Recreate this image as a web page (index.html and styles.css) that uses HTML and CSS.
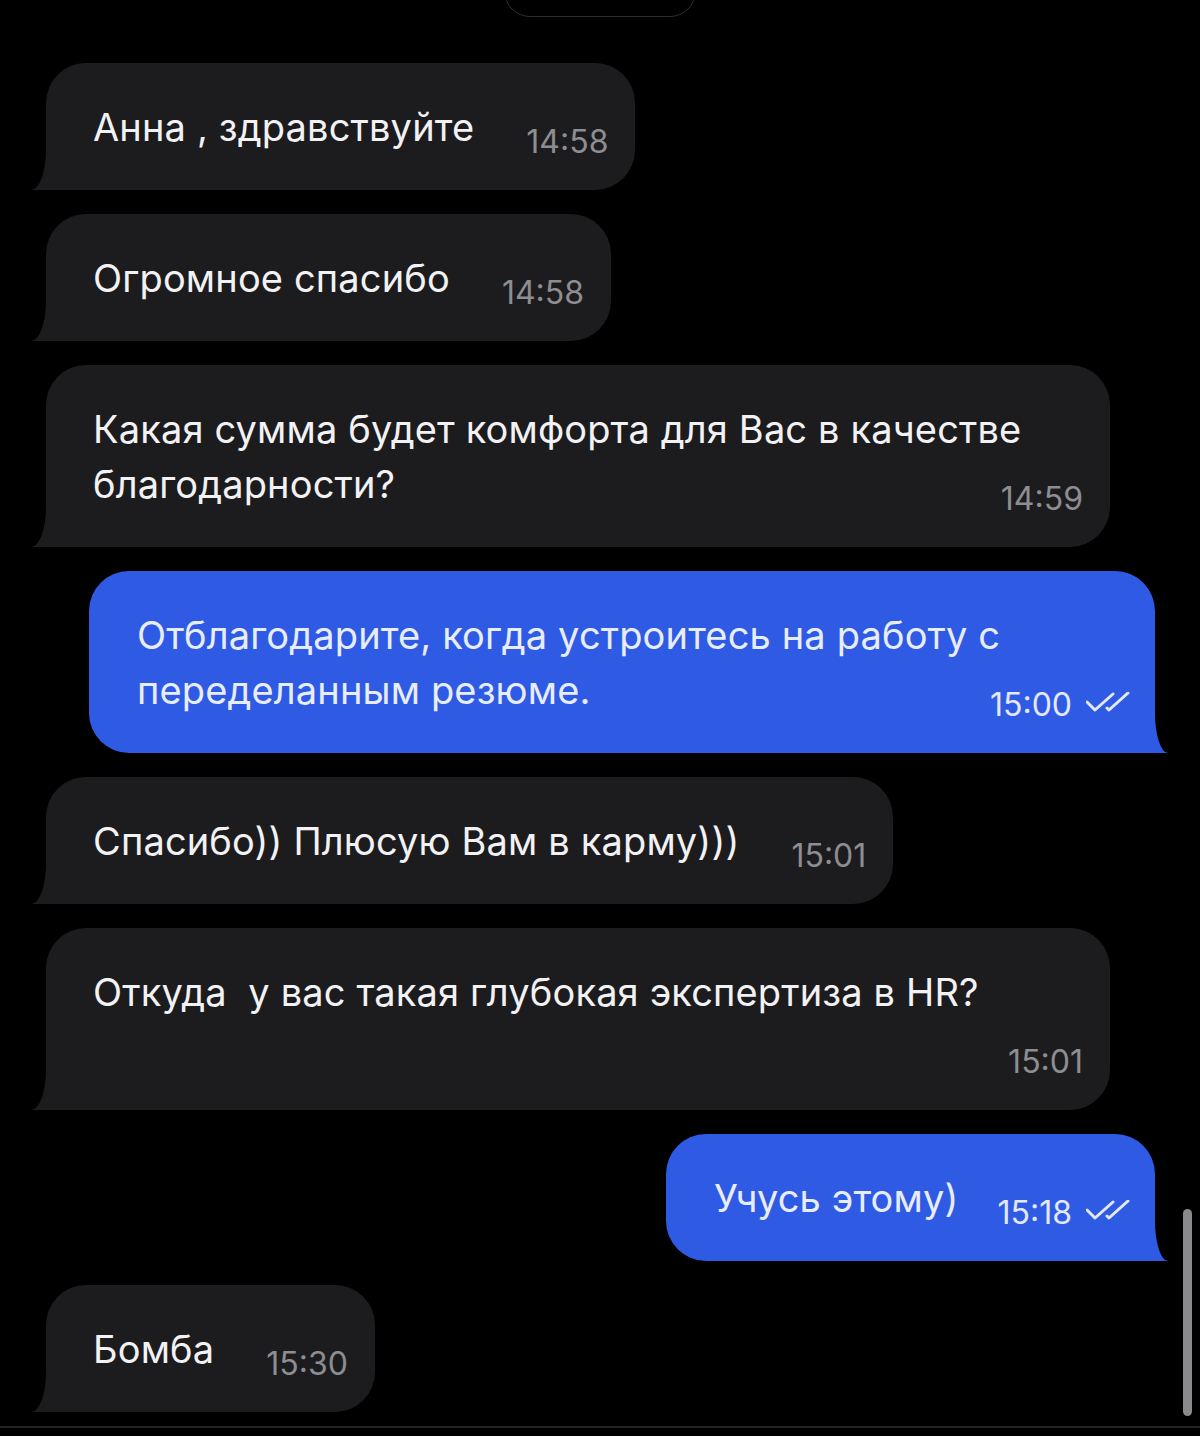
FILE: index.html
```html
<!DOCTYPE html>
<html lang="ru">

<head>
    <meta charset="UTF-8">
    <meta name="viewport" content="width=device-width, initial-scale=1.0">
    <title>Чат</title>
    <link rel="stylesheet" href="styles.css">
</head>

<body>
    <div class="date-pill"></div>

    <div class="chat">
        <div class="msg in">
            <span class="text">Анна , здравствуйте</span><span class="time">14:58</span>
        </div>
        <div class="msg in">
            <span class="text">Огромное спасибо</span><span class="time">14:58</span>
        </div>
        <div class="msg in">
            <span class="text">Какая сумма будет комфорта для Вас в качестве благодарности?</span><span class="time">14:59</span>
        </div>
        <div class="msg out">
            <span class="text">Отблагодарите, когда устроитесь на работу с переделанным резюме.</span><span class="time">15:00<svg class="checks" viewBox="0 0 44 20"><path d="M1 10 L9 18 L27 2 M21 16 L23 18 L42 1" /></svg></span>
        </div>
        <div class="msg in">
            <span class="text">Спасибо)) Плюсую Вам в карму)))</span><span class="time">15:01</span>
        </div>
        <div class="msg in">
            <span class="text">Откуда&nbsp; у вас такая глубокая экспертиза в HR?</span><span class="time">15:01</span>
        </div>
        <div class="msg out">
            <span class="text">Учусь этому)</span><span class="time">15:18<svg class="checks" viewBox="0 0 44 20"><path d="M1 10 L9 18 L27 2 M21 16 L23 18 L42 1" /></svg></span>
        </div>
        <div class="msg in">
            <span class="text">Бомба</span><span class="time">15:30</span>
        </div>
    </div>

    <div class="bottom-line"></div>
    <div class="scrollbar"></div>
</body>

</html>
```

FILE: styles.css
```css
body {
    margin: 0;
    background: #000;
    font-family: Inter, "Noto Sans", sans-serif;
    overflow: hidden;
}

.date-pill {
    width: 190px;
    height: 50px;
    margin: -35px auto 0;
    border: 1px solid #2e2e30;
    border-radius: 26px;
}

.chat {
    display: flex;
    flex-direction: column;
    gap: 24px;
    padding: 46px 45px 0 46px;
}

.msg {
    position: relative;
    max-width: 1064px;
    box-sizing: border-box;
    padding: 37px 27px 35px 47px;
    border-radius: 40px;
    font-size: 38px;
    line-height: 55px;
    letter-spacing: 0.15px;
}

.msg.in {
    align-self: flex-start;
    background: #1c1c1e;
    color: #f2f2f4;
    border-bottom-left-radius: 0;
}

.msg.out {
    align-self: flex-end;
    max-width: 1066px;
    background: #2f5be4;
    color: #e8edfd;
    padding: 37px 25px 35px 48px;
    border-bottom-right-radius: 0;
}

/* bubble tails */
.msg::before,
.msg::after {
    content: "";
    position: absolute;
    bottom: 0;
    height: 40px;
}

.msg.in::before {
    left: -15px;
    width: 40px;
    background: #1c1c1e;
}

.msg.in::after {
    left: -40px;
    width: 40px;
    background: #000;
    border-bottom-right-radius: 15px 40px;
}

.msg.out::before {
    right: -13px;
    width: 40px;
    background: #2f5be4;
}

.msg.out::after {
    right: -40px;
    width: 40px;
    background: #000;
    border-bottom-left-radius: 13px 40px;
}

.time {
    float: right;
    margin-left: 52px;
    margin-top: 29px;
    font-size: 32px;
    line-height: 26px;
    letter-spacing: 0;
    color: #8d8d92;
}

.msg.out .time {
    margin-left: 39px;
    color: #e3e8fb;
}

.checks {
    width: 44px;
    height: 20px;
    margin-left: 14px;
    vertical-align: 4px;
    fill: none;
    stroke: #e3e8fb;
    stroke-width: 3;
    stroke-linecap: round;
    stroke-linejoin: round;
}

.bottom-line {
    height: 2px;
    background: #232325;
    margin-top: 14px;
}

.scrollbar {
    position: absolute;
    left: 1183px;
    top: 1209px;
    width: 9px;
    height: 207px;
    border-radius: 5px;
    background: #8a8a8c;
}
```
